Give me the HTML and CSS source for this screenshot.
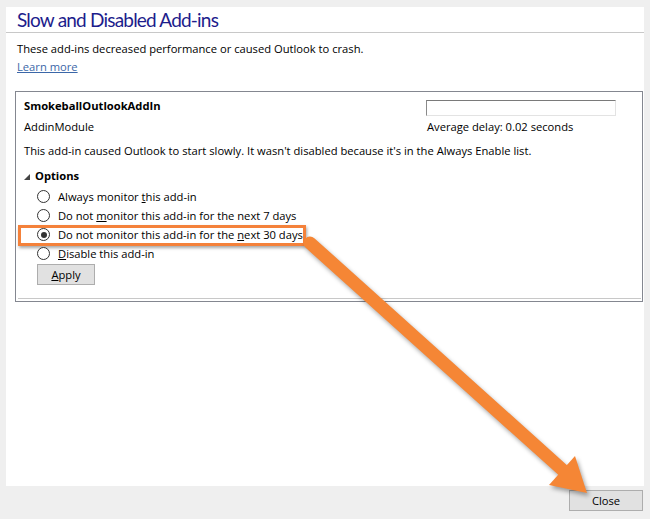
FILE: index.html
```html
<!DOCTYPE html>
<html>
<head>
<meta charset="utf-8">
<link rel="stylesheet" href="styles.css">
</head>
<body>
<div class="panel">
  <div class="title">Slow and Disabled Add-ins</div>
  <div class="intro">
    <div class="desc">These add-ins decreased performance or caused Outlook to crash.</div>
    <a class="link" href="#">Learn more</a>
  </div>
  <div class="box">
    <div class="inner">
      <div class="toprow">
        <div class="name">SmokeballOutlookAddIn</div>
        <div class="field"></div>
      </div>
      <div class="toprow">
        <div class="module">AddinModule</div>
        <div class="delay">Average delay: 0.02 seconds</div>
      </div>
      <div class="msg">This add-in caused Outlook to start slowly. It wasn't disabled because it's in the Always Enable list.</div>
      <div class="options"><span class="tri"></span>Options</div>
      <div class="radios">
        <div class="radio"><span class="dot"></span><span>Always monitor <u>t</u>his add-in</span></div>
        <div class="radio"><span class="dot"></span><span>Do not <u>m</u>onitor this add-in for the next 7 days</span></div>
        <div class="radio hl"><span class="dot on"></span><span>Do not monitor this add-in for the <u>n</u>ext 30 days</span></div>
        <div class="radio"><span class="dot"></span><span><u>D</u>isable this add-in</span></div>
      </div>
      <button class="btn apply"><u>A</u>pply</button>
    </div>
    <div class="etch"></div>
  </div>
</div>
<div class="footer">
  <button class="btn close">Close</button>
</div>
<svg class="arrow" width="650" height="519" viewBox="0 0 650 519">
  <g fill="#f58635" stroke="none">
    <line x1="310" y1="243" x2="566" y2="473" stroke="#f58635" stroke-width="13" stroke-linecap="round"/>
    <polygon points="587,493 575,456 549,485"/>
  </g>
</svg>
</body>
</html>
```
FILE: styles.css
```css
html, body {
  margin: 0;
  padding: 0;
}
body {
  background: #efefef;
  font-family: "Open Sans", "Noto Sans", sans-serif;
  font-size: 11.2px;
  color: #000;
  width: 650px;
  height: 519px;
  position: relative;
  overflow: hidden;
}
.panel {
  margin: 7px 6px 0 6px;
  height: 479px;
  background: #fff;
  display: flex;
  flex-direction: column;
}
.title {
  height: 25px;
  border-bottom: 1px solid #c8c8c8;
  padding-left: 11px;
  font-family: Lato, "Open Sans", sans-serif;
  font-size: 19px;
  letter-spacing: -0.8px;
  line-height: 26px;
  color: #1d1d8c;
  box-sizing: content-box;
}
.intro {
  padding: 8px 0 0 11px;
  display: flex;
  flex-direction: column;
  align-items: flex-start;
  gap: 3px;
  line-height: 15px;
  height: 58px;
  box-sizing: border-box;
}
.link {
  color: #3b67a8;
  text-decoration: underline;
}
.box {
  margin: 0 1px 0 9px;
  border: 1px solid #848790;
  height: 211px;
  box-sizing: border-box;
  display: flex;
  flex-direction: column;
  justify-content: space-between;
}
.inner {
  padding: 6px 0 0 8px;
  display: flex;
  flex-direction: column;
}
.toprow {
  display: flex;
  justify-content: space-between;
  align-items: flex-start;
  padding-right: 26px;
}
.name {
  font-weight: 700;
  line-height: 15px;
  height: 21px;
}
.field {
  width: 188px;
  height: 14px;
  border: 1px solid #e3e3e3;
  border-top-color: #7a7a7a;
  border-left-color: #8a8a8a;
  margin-top: 2px;
  margin-right: 0;
}
.module, .delay {
  line-height: 15px;
  height: 24px;
}
.delay {
  width: 189px;
  padding-left: 1px;
}
.msg {
  line-height: 15px;
  height: 24px;
}
.options {
  font-weight: 700;
  line-height: 15px;
  height: 16px;
  display: flex;
  align-items: center;
  gap: 5px;
}
.tri {
  width: 0;
  height: 0;
  border-left: 6px solid transparent;
  border-bottom: 6px solid #444;
  margin-left: 0;
  margin-top: 3px;
}
.radios {
  display: flex;
  flex-direction: column;
  padding-left: 13px;
  margin-top: 4px;
}
.radio {
  display: flex;
  align-items: center;
  gap: 8px;
  height: 19px;
  line-height: 15px;
  position: relative;
}
.radio.hl::before {
  content: "";
  position: absolute;
  left: -19px;
  top: 0px;
  width: 282px;
  height: 15px;
  border: 3px solid #f4813a;
  box-shadow: 1px 2px 3px rgba(0,0,0,0.35);
}
.dot {
  width: 11px;
  height: 11px;
  border: 1px solid #333;
  border-radius: 50%;
  background: #fff;
  display: flex;
  align-items: center;
  justify-content: center;
  flex: none;
}
.dot.on::after {
  content: "";
  width: 6px;
  height: 6px;
  border-radius: 50%;
  background: #333;
}
.btn {
  font-family: inherit;
  font-size: 11.2px;
  background: #e1e1e1;
  border: 1px solid #adadad;
  color: #000;
  padding: 0;
  height: 21px;
  line-height: 17px;
}
.apply {
  width: 58px;
  margin-left: 13px;
  margin-top: 1px;
  align-self: flex-start;
}
.etch {
  border-top: 1px solid #c8c8c8;
  margin: 0 1px 2px 2px;
}
.footer {
  display: flex;
  justify-content: flex-end;
  padding: 4px 7px 0 0;
}
.close {
  width: 74px;
  height: 21px;
}
.arrow {
  position: absolute;
  left: 0;
  top: 0;
  pointer-events: none;
  filter: drop-shadow(2px 3px 2px rgba(0,0,0,0.35));
}
```
